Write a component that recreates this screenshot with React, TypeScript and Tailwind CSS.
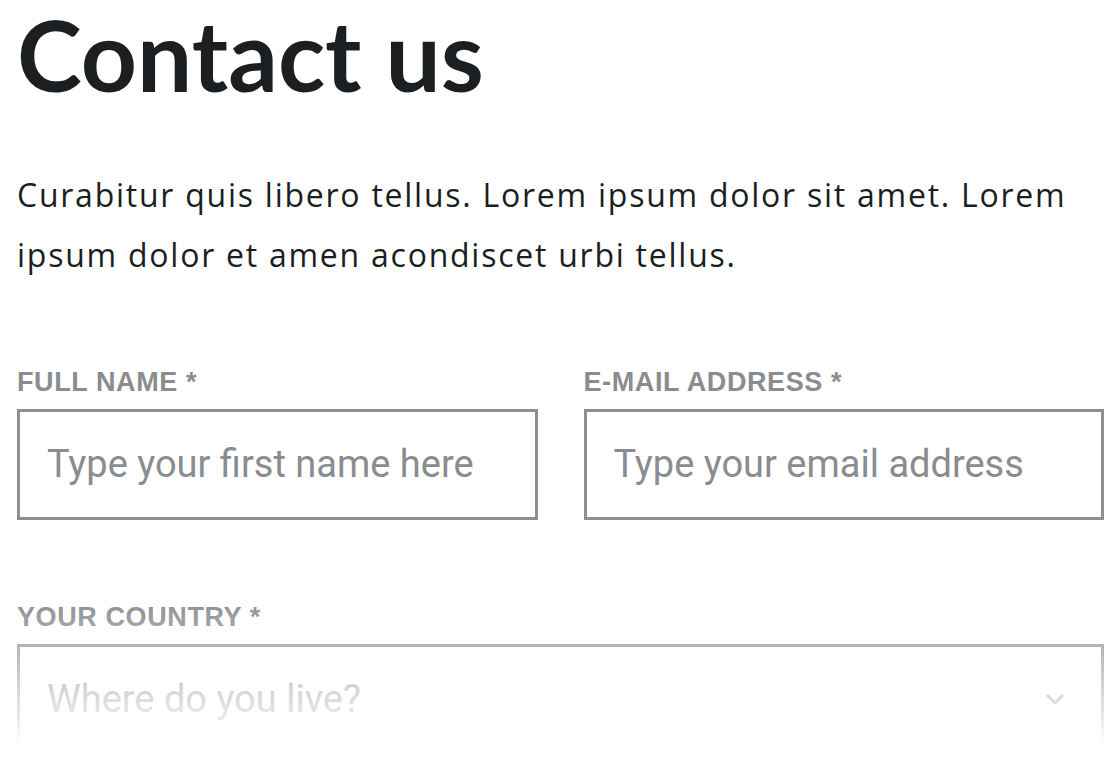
import React from "react";

const labelFont = { fontFamily: "'Liberation Sans', Arial, sans-serif" };
const inputFont = { fontFamily: "Roboto, 'Liberation Sans', sans-serif" };

function Label({ children }: { children: React.ReactNode }) {
  return (
    <label className="block text-[27px] leading-[30px] font-bold text-[#8a8c8f] tracking-[0.6px]" style={labelFont}>
      {children}
    </label>
  );
}

export default function App() {
  return (
    <div className="relative w-[1120px] h-[780px] overflow-hidden bg-white">
      <div className="pl-[17px] pr-[16px]">
        <h1 className="text-[98px] leading-[108px] font-bold text-[#1b1f22]" style={{ fontFamily: "Lato, sans-serif" }}>
          Contact us
        </h1>
        <p className="mt-[57px] text-[32px] leading-[60px] tracking-[1.75px] text-[#1b1f22]" style={{ fontFamily: "'Open Sans', sans-serif" }}>
          Curabitur quis libero tellus. Lorem ipsum dolor sit amet. Lorem ipsum dolor et amen acondiscet urbi tellus.
        </p>
        <div className="mt-[82px] grid grid-cols-2 gap-[46px]">
          <div className="flex flex-col">
            <Label>FULL NAME *</Label>
            <div className="mt-[12px] h-[111px] border-[3px] border-[#8e8f92] flex items-center pl-[27px]">
              <span className="text-[38px] text-[#8a8c8f]" style={inputFont}>Type your first name here</span>
            </div>
          </div>
          <div className="flex flex-col">
            <Label>E-MAIL ADDRESS *</Label>
            <div className="mt-[12px] h-[111px] border-[3px] border-[#8e8f92] flex items-center pl-[27px]">
              <span className="text-[38px] text-[#8a8c8f]" style={inputFont}>Type your email address</span>
            </div>
          </div>
        </div>
        <div className="mt-[82px] flex flex-col">
          <Label>YOUR COUNTRY *</Label>
          <div className="mt-[12px] h-[111px] border-[3px] border-[#8e8f92] flex items-center justify-between pl-[27px] pr-[36px]">
            <span className="text-[38px] text-[#8a8c8f]" style={inputFont}>Where do you live?</span>
            <svg width="20" height="13" viewBox="0 0 20 13" fill="none">
              <path d="M2 2 L10 10 L18 2" stroke="#8a8c8f" strokeWidth="3" />
            </svg>
          </div>
        </div>
      </div>
      <div className="pointer-events-none absolute left-0 right-0 top-[595px] h-[150px] bg-gradient-to-b from-white/0 to-white" />
      <div className="pointer-events-none absolute left-0 right-0 top-[745px] bottom-0 bg-white" />
    </div>
  );
}
